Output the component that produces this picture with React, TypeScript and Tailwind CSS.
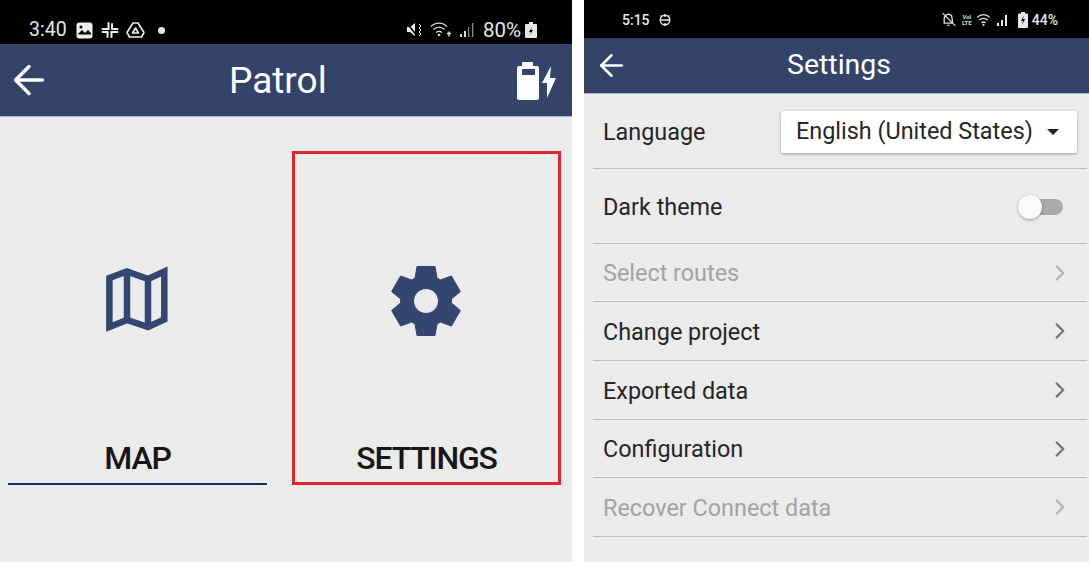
import React from "react";
import { ArrowLeft, ChevronRight } from "lucide-react";

const gearPath = (() => {
  const pts: [number, number][] = [[-11, -23], [-9, -34.5], [9, -34.5], [11, -23]];
  let d = "";
  for (let k = 0; k < 6; k++) {
    const a = (k * Math.PI) / 3;
    for (const [x, y] of pts) {
      const X = 35 + x * Math.cos(a) - y * Math.sin(a);
      const Y = 36 + x * Math.sin(a) + y * Math.cos(a);
      d += (d ? "L" : "M") + X.toFixed(2) + " " + Y.toFixed(2);
    }
  }
  d += "Z M35 23.500a12.500 12.500 0 1 0 0.01 0Z";
  return d;
})();

function MapIcon() {
  return (
    <svg width="66" height="66" viewBox="0 0 66 66" fill="none" stroke="#34466f" strokeWidth="6.500" strokeLinejoin="miter">
      <path d="M4.400 12 L22 5.500 L43 13 L59.300 5.500 V53.500 L43 61 L22 54 L4.400 61 Z" />
      <path d="M22 5.500 V54 M43 13 V61" />
    </svg>
  );
}

function Gear() {
  return (
    <svg width="72" height="72" viewBox="0 0 72 72">
      <path d={gearPath} fill="#34466f" fillRule="evenodd" strokeLinejoin="round" stroke="#34466f" strokeWidth="1" />
    </svg>
  );
}

function ChargeBattery() {
  return (
    <svg width="42" height="42" viewBox="0 0 42 42" fill="white">
      <path fillRule="evenodd" d="M6 7V4a1 1 0 0 1 1-1h9a1 1 0 0 1 1 1v3h4a2 2 0 0 1 2 2v30a2 2 0 0 1-2 2H3a2 2 0 0 1-2-2V9a2 2 0 0 1 2-2Zm0 3v6h13v-6Z" />
      <path d="M35 7 26 24h5v15l9-20h-6Z" />
    </svg>
  );
}

function LeftStatus() {
  return (
    <div className="h-[44px] bg-black flex items-center pl-[29px] pr-[35px] pt-[16px] text-[#e6e6e6]">
      <span className="text-[19.500px] leading-none">3:40</span>
      <svg className="ml-[9px]" width="17" height="17" viewBox="0 0 17 17">
        <rect x="0.500" y="0.500" width="16" height="16" rx="3" fill="#eee" />
        <path d="M2 12l4-4 3 3 3-3 3 3v1.500H2Z" fill="#000" />
        <circle cx="5" cy="5" r="1.500" fill="#000" />
      </svg>
      <svg className="ml-[8px]" width="18" height="18" viewBox="0 0 18 18" fill="#eee">
        <rect x="0.500" y="7" width="8" height="2" rx="1" />
        <rect x="10" y="7" width="7.500" height="2" rx="1" />
        <rect x="0.500" y="10" width="7" height="2" rx="1" />
        <rect x="9.500" y="10" width="8" height="2" rx="1" />
        <rect x="6.500" y="1" width="2" height="8" rx="1" />
        <rect x="10" y="2" width="2" height="6" rx="1" />
        <rect x="5.500" y="10" width="2" height="7" rx="1" />
        <rect x="9.500" y="10" width="2" height="7" rx="1" />
      </svg>
      <svg className="ml-[7px]" width="19" height="18" viewBox="0 0 19 18" fill="none" stroke="#eee" strokeWidth="1.600" strokeLinejoin="round">
        <path d="M7 2h5l6 9.500-2.500 4.500h-12L1 11.500Z" />
        <path d="M9.500 7l3 5h-6Z" />
      </svg>
      <span className="ml-[13px] w-[7px] h-[7px] rounded-full bg-[#e6e6e6]" />
      <svg className="ml-auto" width="16" height="16" viewBox="0 0 16 16" fill="#eee">
        <path d="M0 5h3l5-4v13l-5-4H0Z" />
        <path d="M0 1l10 13" stroke="#000" strokeWidth="1.500" />
        <path d="M12 2l2 2-2 2 2 2-2 2 2 2-2 2" fill="none" stroke="#eee" strokeWidth="1" />
      </svg>
      <svg className="ml-[7px]" width="25" height="18" viewBox="0 0 25 18" fill="none" stroke="#ddd" strokeWidth="1.300">
        <path d="M1 5.500C5.500 1 12.500 1 17 5.500" />
        <path d="M3.500 8.500C7 5.500 11 5.500 14.500 8.500" />
        <path d="M6 11.500C8 10 10 10 12 11.500" />
        <circle cx="9" cy="14" r="1.300" fill="#ddd" stroke="none" />
        <path d="M19 10.500v5M17 12.500h4" strokeWidth="1.500" />
      </svg>
      <svg className="ml-[4px]" width="16" height="16" viewBox="0 0 16 16" fill="#ddd">
        <rect x="1" y="12" width="2" height="3" />
        <rect x="5" y="9" width="2" height="6" />
        <rect x="9" y="5" width="1.300" height="10" fill="#888" />
        <rect x="13" y="1" width="1.300" height="14" fill="#888" />
      </svg>
      <span className="ml-[8px] text-[20.500px] leading-none text-[#e6e6e6]">80%</span>
      <svg className="ml-[4px]" width="12" height="16" viewBox="0 0 12 16" fill="#e6e6e6">
        <path d="M4 0h4v2h3a1 1 0 0 1 1 1v12a1 1 0 0 1-1 1H1a1 1 0 0 1-1-1V3a1 1 0 0 1 1-1h3Z" />
        <path d="M7 5l-3 5h2l-1 3 3-5H6Z" fill="#000" />
      </svg>
    </div>
  );
}

function RightStatus() {
  return (
    <div className="h-[38px] bg-black flex items-center pl-[38px] pr-[31px] pt-[1px] text-[#e6e6e6]">
      <span className="text-[14px] font-medium leading-none">5:15</span>
      <svg className="ml-[8px]" width="14" height="14" viewBox="0 0 14 14" fill="none" stroke="#e6e6e6" strokeWidth="1.400">
        <circle cx="7" cy="7" r="4.800" />
        <path d="M2 7h10M7 1v3M7 10v3M2.500 2.500l1.500 1.500M11.500 2.500l-1.500 1.500" />
      </svg>
      <svg className="ml-auto" width="16" height="15" viewBox="0 0 15 14" fill="none" stroke="#ddd" strokeWidth="1.200">
        <path d="M3 10.500V6a4 4 0 0 1 7-2.500L11 10.500H3ZM6 12.500h2M1.500 1l12 12" />
      </svg>
      <div className="ml-[4px] w-[12px] text-[6px] leading-[6px] font-bold text-[#ddd] text-center">
        <div>Vol</div>
        <div>LTE</div>
      </div>
      <svg className="ml-[3px]" width="15" height="15" viewBox="0 0 14 14" fill="none" stroke="#ddd" strokeWidth="1.200">
        <path d="M1 5C4.500 1.500 9.500 1.500 13 5M3 7.500C5.500 5.500 8.500 5.500 11 7.500M5 10c1.200-.8 2.800-.8 4 0" />
        <circle cx="7" cy="12" r="1" fill="#ddd" stroke="none" />
      </svg>
      <svg className="ml-[5px]" width="14" height="14" viewBox="0 0 14 14" fill="#e6e6e6">
        <rect x="1" y="10" width="2" height="3" />
        <rect x="5" y="7" width="2" height="6" />
        <rect x="9" y="2" width="2" height="11" />
      </svg>
      <svg className="ml-[8px]" width="10" height="16" viewBox="0 0 10 16">
        <path d="M3 0h4v1.500h2a1 1 0 0 1 1 1V15a1 1 0 0 1-1 1H1a1 1 0 0 1-1-1V2.500a1 1 0 0 1 1-1h2Z" fill="#e6e6e6" />
        <path d="M6 3.500 3 9h2l-1 4 3-6H5Z" fill="#000" />
      </svg>
      <span className="ml-[4px] text-[14px] font-medium leading-none">44%</span>
    </div>
  );
}

function Row({ label, disabled, h }: { label: string; disabled?: boolean; h: string }) {
  return (
    <div className={h + " flex items-center justify-between border-b border-[#bdbdbd] pl-[10px] pr-[14px]"}>
      <span className={"text-[23.400px] leading-none pt-[3px] " + (disabled ? "text-[#a3a3a3]" : "text-[#262626]")}>{label}</span>
      <ChevronRight size={26} strokeWidth={2.200} className={disabled ? "text-[#b4b4b4]" : "text-[#757575]"} />
    </div>
  );
}

export default function App() {
  return (
    <div className="w-[1089px] h-[562px] bg-white flex overflow-hidden font-['Roboto',sans-serif]">
      <div className="w-[572px] h-full bg-[#ebebeb] shrink-0">
        <LeftStatus />
        <div className="h-[73px] bg-[#33436a] border-b border-[#aab4cc] flex items-center pl-[6px] pr-[14px]">
          <ArrowLeft size={46} strokeWidth={1.800} className="text-white" />
          <span className="ml-[177px] text-[37px] text-white leading-none">Patrol</span>
          <span className="ml-auto">
            <ChargeBattery />
          </span>
        </div>
        <div className="flex pl-[8px] pt-[34px]">
          <div className="w-[259px] h-[334px] flex flex-col items-center border-b-2 border-[#1d2a5c]">
            <div className="h-[291px] flex items-center justify-center pt-[5px]">
              <MapIcon />
            </div>
            <span className="text-[32px] leading-none font-medium text-[#161616] tracking-[-1.200px]">MAP</span>
          </div>
          <div className="ml-[25px] w-[269px] h-[334px] flex flex-col items-center border-[3px] border-[#e0252f]">
            <div className="h-[288px] flex items-center justify-center pt-[5px]">
              <Gear />
            </div>
            <span className="text-[32px] leading-none font-medium text-[#161616] tracking-[-1.200px]">SETTINGS</span>
          </div>
        </div>
      </div>
      <div className="ml-[12px] w-[505px] h-full bg-[#ebebeb] shrink-0">
        <RightStatus />
        <div className="h-[56px] bg-[#33436a] border-b border-[#aab4cc] flex items-center pl-[10px]">
          <ArrowLeft size={35} strokeWidth={1.800} className="text-white" />
          <span className="ml-[158px] text-[28.500px] text-white leading-none">Settings</span>
        </div>
        <div className="pl-[9px] pr-[2px]">
          <div className="h-[75px] flex items-center justify-between border-b border-[#bdbdbd] pl-[10px]">
            <span className="text-[23.400px] leading-none text-[#262626] pt-[3px]">Language</span>
            <div className="w-[296px] h-[42px] mt-[1px] mr-[10px] bg-white rounded-[2px] shadow-[0_1px_3px_rgba(0,0,0,0.35)] flex items-center pl-[15px] pr-[18px] justify-between">
              <span className="text-[23.400px] leading-none text-[#262626]">English (United States)</span>
              <span className="w-0 h-0 border-x-[6px] border-x-transparent border-t-[6px] border-t-[#222]" />
            </div>
          </div>
          <div className="h-[75px] flex items-center justify-between border-b border-[#bdbdbd] pl-[10px] pr-[24px]">
            <span className="text-[23.400px] leading-none text-[#262626] pt-[3px]">Dark theme</span>
            <div className="relative w-[42px] h-[16px] mt-[1px] rounded-full bg-[#ababab]">
              <span className="absolute left-[-3px] top-[-4px] w-[24px] h-[24px] rounded-full bg-[#fafafa] shadow-[0_1px_3px_rgba(0,0,0,0.35)]" />
            </div>
          </div>
          <Row h="h-[58px]" label="Select routes" disabled />
          <Row h="h-[59px]" label="Change project" />
          <Row h="h-[59px]" label="Exported data" />
          <Row h="h-[58px]" label="Configuration" />
          <Row h="h-[59px]" label="Recover Connect data" disabled />
        </div>
      </div>
    </div>
  );
}
